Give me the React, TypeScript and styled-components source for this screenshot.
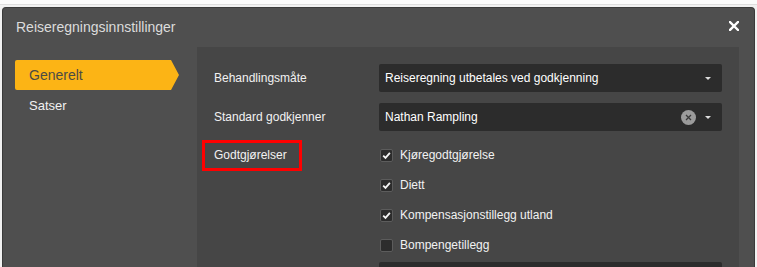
import React from "react";
import styled, { createGlobalStyle } from "styled-components";

const GlobalStyle = createGlobalStyle`
  html, body { margin: 0; padding: 0; }
  body {
    background: linear-gradient(#fbfbfb 0 4px, #dedede 4px 5px, #f1f1f1 5px);
    font-family: "Liberation Sans", Arial, sans-serif;
    overflow: hidden;
    height: 267px;
  }
`;

const Backdrop = styled.div`
  padding: 7px 2px 0 2px;
  height: 260px;
  border-left: 0;
`;

const Dialog = styled.div`
  height: 270px;
  background: #4f4f4f;
  border: 1px solid #3a3a3a;
  border-bottom: 0;
  border-radius: 4px 4px 0 0;
  display: flex;
  flex-direction: column;
  overflow: hidden;
`;

const Header = styled.div`
  height: 39px;
  flex: none;
  display: flex;
  align-items: center;
  justify-content: space-between;
  padding: 0 15px 0 13px;
`;

const Title = styled.div`
  font-size: 14px;
  color: #dcdcdc;
  margin-top: -2px;
`;

const CloseButton = styled.button`
  border: 0;
  background: transparent;
  padding: 0;
  width: 10px;
  height: 10px;
  display: flex;
  cursor: pointer;
  margin-top: -3px;
`;

const Body = styled.div`
  flex: 1;
  display: flex;
  padding: 0 15px 0 12px;
  min-height: 0;
`;

const Nav = styled.nav`
  width: 164px;
  flex: none;
  padding-top: 13px;
  display: flex;
  flex-direction: column;
`;

const NavItem = styled.div<{ $active?: boolean; $size: number }>`
  height: 30px;
  display: flex;
  align-items: center;
  padding-left: 14px;
  font-size: ${(p) => p.$size}px;
  color: ${(p) => (p.$active ? "#4b4b45" : "#f2f2f2")};
  background: ${(p) => (p.$active ? "#fcb415" : "transparent")};
  border-radius: 2px 0 0 2px;
  clip-path: ${(p) =>
    p.$active
      ? "polygon(0 0, 156px 0, 100% 50%, 156px 100%, 0 100%)"
      : "none"};
`;

const Panel = styled.div`
  flex: 1;
  margin-left: 18px;
  background: #464646;
  padding: 17px 17px 0 17px;
  display: flex;
  flex-direction: column;
`;

const Row = styled.div<{ $gap?: number }>`
  display: grid;
  grid-template-columns: 165px 1fr;
  margin-top: ${(p) => p.$gap ?? 0}px;
`;

const Label = styled.div<{ $height: number }>`
  height: ${(p) => p.$height}px;
  line-height: ${(p) => p.$height}px;
  font-size: 12px;
  color: #f2f2f2;
`;

const HighlightText = styled.span`
  position: relative;
  &::after {
    content: "";
    position: absolute;
    left: -12px;
    right: -15px;
    top: -8px;
    bottom: -9px;
    border: 3px solid #ff0000;
  }
`;

const Select = styled.div`
  height: 28px;
  background: #2c2c2c;
  border-radius: 2px;
  display: flex;
  align-items: center;
  padding: 0 11px 0 6px;
  font-size: 12px;
  color: #ffffff;
`;

const SelectValue = styled.span`
  flex: 1;
`;

const ClearIcon = styled.span`
  width: 15px;
  height: 15px;
  display: flex;
  margin-right: 9px;
`;

const Caret = styled.span`
  width: 0;
  height: 0;
  border-left: 3px solid transparent;
  border-right: 3px solid transparent;
  border-top: 3px solid #dddddd;
`;

const CheckList = styled.div`
  display: flex;
  flex-direction: column;
`;

const CheckItem = styled.label`
  height: 30px;
  display: flex;
  align-items: center;
  gap: 7px;
  font-size: 12px;
  color: #f2f2f2;
  padding-left: 1px;
`;

const Box = styled.span`
  width: 11px;
  height: 11px;
  border: 1px solid #5c5c5c;
  border-radius: 2px;
  background: #2c2c2c;
  display: flex;
  align-items: center;
  justify-content: center;
`;

const Check = ({ checked }: { checked: boolean }) => (
  <Box>
    {checked && (
      <svg width="9" height="9" viewBox="0 0 9 9">
        <path d="M1.2 4.6 L3.5 6.9 L7.9 1.9" fill="none" stroke="#f4f4f4" strokeWidth="1.8" />
      </svg>
    )}
  </Box>
);

const items = [
  { label: "Kjøregodtgjørelse", checked: true },
  { label: "Diett", checked: true },
  { label: "Kompensasjonstillegg utland", checked: true },
  { label: "Bompengetillegg", checked: false },
];

export default function App() {
  return (
    <>
      <GlobalStyle />
      <Backdrop>
        <Dialog>
          <Header>
            <Title>Reiseregningsinnstillinger</Title>
            <CloseButton aria-label="Lukk">
              <svg width="10" height="10" viewBox="0 0 10 10">
                <path d="M1 1 L9 9 M9 1 L1 9" stroke="#ffffff" strokeWidth="2.4" strokeLinecap="square" />
              </svg>
            </CloseButton>
          </Header>
          <Body>
            <Nav>
              <NavItem $active $size={14}>Generelt</NavItem>
              <NavItem $size={13}>Satser</NavItem>
            </Nav>
            <Panel>
              <Row>
                <Label $height={28}>Behandlingsmåte</Label>
                <Select>
                  <SelectValue>Reiseregning utbetales ved godkjenning</SelectValue>
                  <Caret />
                </Select>
              </Row>
              <Row $gap={11}>
                <Label $height={28}>Standard godkjenner</Label>
                <Select>
                  <SelectValue>Nathan Rampling</SelectValue>
                  <ClearIcon>
                    <svg width="15" height="15" viewBox="0 0 15 15">
                      <circle cx="7.5" cy="7.5" r="7.5" fill="#9b9b9b" />
                      <path d="M5 5 L10 10 M10 5 L5 10" stroke="#3a3a3a" strokeWidth="1.3" />
                    </svg>
                  </ClearIcon>
                  <Caret />
                </Select>
              </Row>
              <Row $gap={9}>
                <Label $height={30}>
                  <HighlightText>Godtgjørelser</HighlightText>
                </Label>
                <CheckList>
                  {items.map((it) => (
                    <CheckItem key={it.label}>
                      <Check checked={it.checked} />
                      {it.label}
                    </CheckItem>
                  ))}
                </CheckList>
              </Row>
              <Row $gap={2}>
                <Label $height={28}></Label>
                <Select>
                  <SelectValue></SelectValue>
                </Select>
              </Row>
            </Panel>
          </Body>
        </Dialog>
      </Backdrop>
    </>
  );
}
